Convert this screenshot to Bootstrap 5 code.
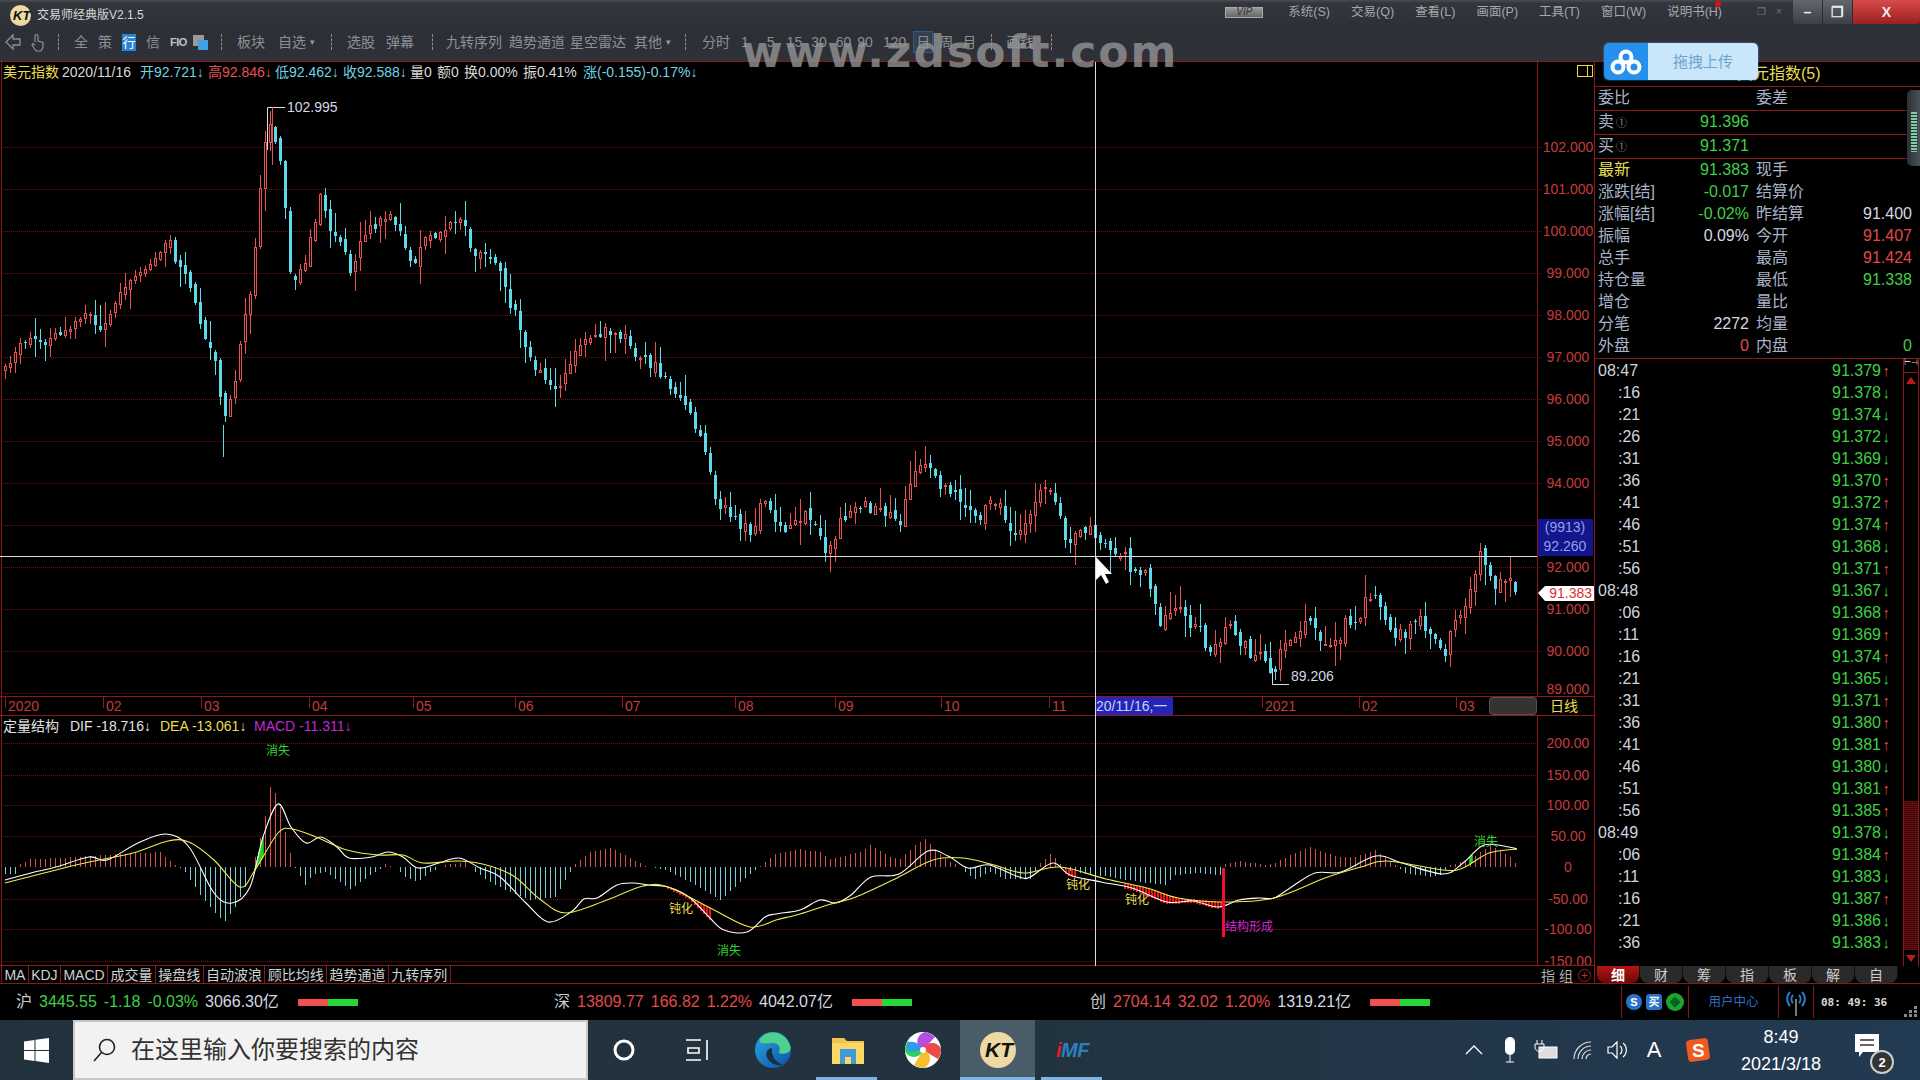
<!DOCTYPE html>
<html lang="zh-CN">
<head>
    <meta charset="UTF-8">
    <meta name="viewport" content="width=device-width, initial-scale=1.0">
    <title>交易师经典版</title>
    <link href="https://cdn.jsdelivr.net/npm/bootstrap@5.3.0/dist/css/bootstrap.min.css" rel="stylesheet">
    <style>
        html, body { width: 1920px; height: 1080px; overflow: hidden; background: #000; }
        body { font-family: "Liberation Sans", "Noto Sans CJK SC", sans-serif; font-size: 14px; line-height: 1; color: #c8c8d0; }
        .app-head { height: 62px; background: linear-gradient(#4a4d53 0, #33363c 3px, #2c2f36 30px, #2e3138 100%); border-bottom: 1px solid #8a1a1a; }
        .title-row { height: 30px; font-size: 12px; }
        .app-title { color: #d8d8d8; margin-left: 6px; }
        .kt-logo { width: 21px; height: 21px; margin-left: 10px; }
        .menu-box { margin-left: auto; color: #a4a7ac; font-size: 12.5px; gap: 21px; }
        .menu-box > span { margin-bottom: 6px; }
        .vip-tag { width: 38px; height: 11px; background: linear-gradient(#999, #666); color: #333; font-size: 10px; font-style: italic; border: 1px solid #aaa; margin-right: 4px; }
        .has-dot { position: relative; }
        .has-dot::after { content: ""; position: absolute; right: 1px; top: -5px; width: 6px; height: 6px; border-radius: 50%; background: #e01010; }
        .win-mini { color: #777; font-size: 10px; margin-left: 14px; gap: 10px; width: 15px; }
        .win-btns { width: 127px; height: 24px; margin-top: -6px; border-radius: 0 0 3px 3px; overflow: hidden; }
        .win-btn { width: 30px; height: 24px; background: linear-gradient(#63666c, #3c3f45); color: #eee; border-right: 1px solid #2a2c30; font-size: 14px; font-weight: 700; }
        .win-close { width: 67px; background: linear-gradient(#d84a4a, #9c2020); border-right: 0; }
        .tool-row { height: 24px; color: #8d9096; padding-left: 4px; }
        .tool-sep { width: 0; height: 16px; border-left: 1px dashed #8d9096; }
        .drop-mark { font-size: 9px; color: #999; margin-left: 4px; }
        .hang-box { width: 14px; height: 17px; background: #2b83d6; color: #fff; font-size: 13px; }
        .fio-txt { font-weight: 700; font-size: 11px; color: #c0c2c6; letter-spacing: -.5px; width: 15px; }
        .range-on { border: 1px solid #31568c; background: #35404f; padding: 3px 2px; margin-right: -3px; }
        .ml-5 { margin-left: 5px; } .ml-6 { margin-left: 6px; } .ml-7 { margin-left: 7px; } .ml-8 { margin-left: 8px; } .ml-9 { margin-left: 9px; }
        .ml-10 { margin-left: 10px; } .ml-11 { margin-left: 11px; } .ml-12 { margin-left: 12px; } .ml-13 { margin-left: 13px; } .ml-14 { margin-left: 14px; }
        .ml-15 { margin-left: 15px; } .ml-16 { margin-left: 16px; } .ml-17 { margin-left: 17px; } .ml-18 { margin-left: 18px; }
        .mr-10 { margin-right: 10px; } .mr-13 { margin-right: 13px; } .mr-14 { margin-right: 14px; } .mr-15 { margin-right: 15px; } .mr-16 { margin-right: 16px; }
        .water-mark { position: absolute; left: 742px; top: 26px; color: rgba(150, 150, 150, .8); font: 700 44px "DejaVu Sans", sans-serif; letter-spacing: 2px; line-height: 52px; pointer-events: none; }
        .upload-box { position: absolute; z-index: 3; left: 1604px; top: 43px; width: 154px; height: 37px; display: flex; border-radius: 5px; overflow: hidden; box-shadow: 0 0 2px #46a0f0; }
        .upload-ico { width: 44px; background: #2590ee; }
        .upload-txt { flex: 1; background: #c9e6fb; color: #6fa4cf; font-size: 15px; }
        .work-row { height: 922px; }
        .chart-col { width: 1594px; }
        .chart-svg { display: block; }
        .ind-tabs { height: 18px; border-bottom: 1px solid #8a1a1a; color: #d0d0d0; font-size: 14px; padding-left: 1px; }
        .ind-tab { height: 17px; padding: 2px 2.4px 0; border-right: 1px solid #8a1a1a; }
        .ind-tab:first-child { border-left: 1px solid #8a1a1a; }
        .ind-right { margin-left: auto; color: #b0b0b0; gap: 5px; padding-right: 3px; padding-top: 2px; }
        .plus-ring { width: 13px; height: 13px; border: 1px solid #a02020; border-radius: 50%; color: #c03030; font-size: 11px; }
        .side-col { width: 326px; border-left: 1px solid #8a1a1a; position: relative; font-size: 16px; }
        .side-head { height: 24px; color: #e8dc50; padding-left: 142px; }
        .line-row { height: 24px; border-top: 1px solid #8a1a1a; padding-left: 3px; padding-right: 8px; padding-bottom: 2px; }
        .q-lab { color: #a8b3c8; }
        .circ-num { color: #888; font-size: 11px; margin-left: 2px; }
        .q-wide { width: 158px; }
        .q-short { width: 58px; }
        .q-val { width: 93px; text-align: right; }
        .side-stats { height: 200px; border-top: 1px solid #8a1a1a; padding: 0 8px 0 3px; }
        .stat-row { height: 22px; }
        .stat-left { width: 151px; }
        .stat-right { width: 156px; margin-left: 7px; }
        .c-green { color: #3fcf45; }
        .c-red { color: #e04a4a; }
        .c-white { color: #d6d8e2; }
        .c-yel { color: #eadf52; }
        .tick-box { border-top: 1px solid #8a1a1a; height: 608px; }
        .tick-col { width: 308px; padding-top: 2px; }
        .tick-row { height: 22px; padding-left: 3px; padding-right: 13px; padding-bottom: 2px; }
        .tick-time { color: #d0d4de; }
        .tick-sub { padding-left: 20px; }
        .tick-arrow { width: 9px; text-align: right; font-size: 15px; }
        .tick-strip { width: 16px; border-left: 1px solid #8a1a1a; border-right: 1px solid #8a1a1a; position: relative; }
        .strip-pin { height: 14px; color: #ddd; font-size: 8px; text-align: center; border-bottom: 1px solid #8a1a1a; }
        .strip-up { position: absolute; left: 2px; top: 18px; border: 5px solid transparent; border-bottom: 7px solid #c01818; border-top: 0; }
        .strip-thumb { position: absolute; left: 0; right: 0; top: 442px; height: 149px; background: repeating-linear-gradient(#6a0f0f 0, #6a0f0f 1px, #3a0606 1px, #3a0606 2px); }
        .strip-down { position: absolute; left: 2px; top: 596px; border: 5px solid transparent; border-top: 7px solid #c01818; border-bottom: 0; }
        .grip-vol { position: absolute; right: 0; top: 28px; width: 13px; height: 76px; border-radius: 5px 0 0 5px; background: linear-gradient(90deg, #2a3034, #4a5257); }
        .grip-bars { position: absolute; right: 3px; top: 22px; width: 6px; height: 40px; background: repeating-linear-gradient(#7ed0a0 0, #7ed0a0 2px, #2a3034 2px, #2a3034 3px); }
        .detail-tabs { height: 18px; border-bottom: 1px solid #8a1a1a; padding-left: 2px; font-size: 14px; }
        .detail-tab { width: 43px; height: 17px; background: #2a2a2a; border-radius: 0 0 8px 8px; color: #ccc; border-right: 1px solid #111; }
        .detail-tab.is-on { background: linear-gradient(#b81414, #6a0808); color: #fff; font-weight: 700; }
        .state-bar { height: 36px; font-size: 16px; position: relative; }
        .mkt-block { position: absolute; top: 10px; height: 16px; gap: 7px; white-space: nowrap; }
        .mkt-hu { left: 16px; } .mkt-shen { left: 554px; } .mkt-chuang { left: 1090px; }
        .mkt-bars { display: flex; margin-left: 12px; }
        .mkt-r { width: 30px; height: 7px; background: #f35050; }
        .mkt-g { width: 30px; height: 7px; background: #23d838; }
        .state-right { position: absolute; left: 1621px; top: 2px; height: 32px; width: 280px; }
        .ico-chip { width: 16px; height: 16px; border-radius: 3px; color: #fff; font-size: 11px; font-weight: 700; background: #2a72c8; }
        .ico-round { border-radius: 50%; }
        .red-sep { width: 0; height: 32px; border-left: 1px solid #8a1a1a; }
        .user-link { color: #2f6fc8; font-size: 12.5px; width: 89px; text-align: center; }
        .wifi-cell { width: 34px; }
        .clock-txt { color: #d8d8d8; font: 700 11px "DejaVu Sans Mono", monospace; margin-left: 7px; }
        .grip-dots { position: absolute; right: 2px; bottom: 2px; }
        .task-bar { height: 60px; background: linear-gradient(90deg, #21323d, #22323e 50%, #223a52); position: relative; color: #fff; }
        .start-btn { width: 73px; }
        .find-box { width: 515px; height: 60px; background: #f2f2f2; border: 2px solid #c8c8c8; color: #333; font-size: 24px; padding-left: 18px; gap: 14px; }
        .cortana-cell { width: 72px; }
        .taskview-cell { width: 74px; }
        .task-cell { width: 75px; height: 60px; position: relative; }
        .task-cell.is-open::after { content: ""; position: absolute; left: 6px; right: 8px; bottom: 0; height: 3px; background: #7db4e4; }
        .task-cell.is-on { background: #4a5c68; }
        .task-cell.is-on::after { left: 0; right: 0; }
        .edge-cell { margin-left: 1px; }
        .imf-txt { font: italic 900 20px "Liberation Sans", sans-serif; color: #2f7fbf; letter-spacing: -.5px; }
        .imf-i { color: #e02020; }
        .tray-box { margin-left: auto; height: 60px; margin-right: 24px; }
        .tray-cell { width: 36px; height: 60px; }
        .tray-letter { font-size: 22px; }
        .clock-box { width: 130px; height: 60px; font-size: 18px; gap: 9px; }
        .note-cell { width: 50px; position: relative; }
        .note-icon { margin-top: -6px; margin-left: -8px; }
        .note-num { position: absolute; left: 24px; top: 30px; width: 24px; height: 24px; border-radius: 50%; border: 2px solid #ccc; background: #333; font-size: 13px; font-weight: 700; }
    </style>
</head>
<body>
    <!-- title + toolbar -->
    <div class="app-head position-relative">
        <div class="title-row d-flex align-items-center">
            <svg class="kt-logo" viewBox="0 0 21 21"><circle cx="10.5" cy="10.5" r="10.5" fill="#ecd9a4"/><text x="3" y="15" font-size="13" font-weight="700" font-style="italic" font-family="Liberation Sans" fill="#111">KT</text></svg>
            <span class="app-title">交易师经典版V2.1.5</span>
            <div class="menu-box d-flex align-items-center">
                <span class="vip-tag d-flex align-items-center justify-content-center">VIP</span>
                <span>系统(S)</span><span>交易(Q)</span><span>查看(L)</span><span>画面(P)</span><span>工具(T)</span><span>窗口(W)</span><span class="has-dot">说明书(H)</span>
                <span class="win-mini d-flex"><span>❐</span><span>×</span></span>
                <div class="win-btns d-flex">
                    <span class="win-btn d-flex align-items-center justify-content-center">–</span>
                    <span class="win-btn d-flex align-items-center justify-content-center">❐</span>
                    <span class="win-btn win-close d-flex align-items-center justify-content-center">X</span>
                </div>
            </div>
        </div>
        <div class="tool-row d-flex align-items-center">
            <svg width="18" height="18" viewBox="0 0 18 18" fill="none" stroke="#8d9096" stroke-width="1.3"><path d="M9 2 2 9l7 7v-4h7V6H9z"/></svg>
            <svg class="ms-2" width="16" height="19" viewBox="0 0 16 19" fill="none" stroke="#8d9096" stroke-width="1.2"><path d="M5 9V3a1.4 1.4 0 0 1 3 0v5l5 1.5V14l-2 4H6l-4-6 1-1.5L5 12"/></svg>
            <span class="tool-sep ml-12 mr-15"></span>
            <span>全</span><span class="ml-10">策</span><span class="hang-box ml-10 d-flex align-items-center justify-content-center">行</span><span class="ml-10">信</span>
            <span class="fio-txt ml-10">FIO</span>
            <svg class="ml-8" width="15" height="15" viewBox="0 0 15 15"><rect width="11" height="11" fill="#9a9a9a"/><rect x="5" y="5" width="10" height="10" fill="#3ea0e8"/></svg>
            <span class="tool-sep ml-13 mr-15"></span>
            <span>板块</span><span class="ml-13">自选</span><span class="drop-mark">▾</span>
            <span class="tool-sep ml-16 mr-15"></span>
            <span>选股</span><span class="ml-11">弹幕</span>
            <span class="tool-sep ml-18 mr-13"></span>
            <span>九转序列</span><span class="ml-7">趋势通道</span><span class="ml-5">星空雷达</span><span class="ml-8">其他</span><span class="drop-mark">▾</span>
            <span class="tool-sep ml-14 mr-16"></span>
            <span>分时</span>
            <span class="ml-11">1</span><span class="ml-18">5</span><span class="ml-12">15</span><span class="ml-9">30</span><span class="ml-9">60</span><span class="ml-6">90</span><span class="ml-10">120</span>
            <span class="range-on ml-7">日</span><span class="ml-9">周</span><span class="ml-9">月</span>
            <span class="tool-sep ml-15 mr-14"></span>
            <span>画线</span>
            <span class="tool-sep ml-17"></span>
        </div>
        <div class="water-mark">www.zdsoft.com</div>
        <div class="upload-box">
            <div class="upload-ico d-flex align-items-center justify-content-center">
                <svg width="32" height="26" viewBox="0 0 32 26" fill="none" stroke="#fff" stroke-width="4"><circle cx="16" cy="8" r="5.5"/><circle cx="8" cy="18" r="5.5"/><circle cx="24" cy="18" r="5.5"/></svg>
            </div>
            <div class="upload-txt d-flex align-items-center justify-content-center">拖拽上传</div>
        </div>
    </div>

    <div class="work-row d-flex">
        <!-- charts -->
        <div class="chart-col">
            <svg id="chartSvg" class="chart-svg" width="1594" height="904" viewBox="0 62 1594 904"></svg>
            <div class="ind-tabs d-flex align-items-center">
                <span class="ind-tab">MA</span><span class="ind-tab">KDJ</span><span class="ind-tab">MACD</span><span class="ind-tab">成交量</span><span class="ind-tab">操盘线</span><span class="ind-tab">自动波浪</span><span class="ind-tab">顾比均线</span><span class="ind-tab">趋势通道</span><span class="ind-tab">九转序列</span>
                <span class="ind-right d-flex align-items-center"><span>指 组</span><span class="plus-ring d-flex align-items-center justify-content-center">+</span></span>
            </div>
        </div>
        <!-- quote panel -->
        <div class="side-col">
            <div class="side-head d-flex align-items-center">美元指数(5)</div>
            <div class="line-row d-flex align-items-center"><span class="q-lab q-wide">委比</span><span class="q-lab">委差</span></div>
            <div class="line-row d-flex align-items-center"><span class="q-lab q-short">卖<span class="circ-num">①</span></span><span class="q-val c-green">91.396</span></div>
            <div class="line-row d-flex align-items-center"><span class="q-lab q-short">买<span class="circ-num">①</span></span><span class="q-val c-green">91.371</span></div>
            <div class="side-stats" id="statBox"></div>
            <div class="tick-box d-flex">
                <div class="tick-col" id="tickBox"></div>
                <div class="tick-strip">
                    <div class="strip-pin">⊢⊣</div>
                    <span class="strip-up"></span><span class="strip-thumb"></span><span class="strip-down"></span>
                </div>
            </div>
            <div class="detail-tabs d-flex">
                <span class="detail-tab is-on d-flex align-items-center justify-content-center">细</span><span class="detail-tab d-flex align-items-center justify-content-center">财</span><span class="detail-tab d-flex align-items-center justify-content-center">筹</span><span class="detail-tab d-flex align-items-center justify-content-center">指</span><span class="detail-tab d-flex align-items-center justify-content-center">板</span><span class="detail-tab d-flex align-items-center justify-content-center">解</span><span class="detail-tab d-flex align-items-center justify-content-center">自</span>
            </div>
            <div class="grip-vol"><span class="grip-bars"></span></div>
        </div>
    </div>

    <!-- market strip -->
    <div class="state-bar">
        <div class="mkt-block mkt-hu d-flex align-items-center"><span>沪</span><span class="c-green">3445.55</span><span class="c-green">-1.18</span><span class="c-green">-0.03%</span><span class="c-white">3066.30亿</span><span class="mkt-bars"><span class="mkt-r"></span><span class="mkt-g"></span></span></div>
        <div class="mkt-block mkt-shen d-flex align-items-center"><span>深</span><span class="c-red">13809.77</span><span class="c-red">166.82</span><span class="c-red">1.22%</span><span class="c-white">4042.07亿</span><span class="mkt-bars"><span class="mkt-r"></span><span class="mkt-g"></span></span></div>
        <div class="mkt-block mkt-chuang d-flex align-items-center"><span>创</span><span class="c-red">2704.14</span><span class="c-red">32.02</span><span class="c-red">1.20%</span><span class="c-white">1319.21亿</span><span class="mkt-bars"><span class="mkt-r"></span><span class="mkt-g"></span></span></div>
        <div class="state-right d-flex align-items-center">
            <span class="red-sep"></span>
            <span class="ico-chip ico-round d-flex align-items-center justify-content-center ms-1">S</span>
            <span class="ico-chip d-flex align-items-center justify-content-center ms-1">买</span>
            <svg class="ms-1" width="18" height="18" viewBox="0 0 16 16"><circle cx="8" cy="8" r="8" fill="#1fa52f"/><path d="M8 3l5 5-5 5-5-5z" fill="#062"/></svg>
            <span class="red-sep ms-1"></span>
            <span class="user-link">用户中心</span>
            <span class="red-sep"></span>
            <span class="wifi-cell d-flex justify-content-center"><svg width="26" height="30" viewBox="0 0 26 30" fill="none" stroke="#2e78c8" stroke-width="2"><path d="M7 5a10 10 0 0 0 0 14M19 5a10 10 0 0 1 0 14M10 8a6 6 0 0 0 0 8M16 8a6 6 0 0 1 0 8"/><path d="M13 12v17" stroke="#777" stroke-width="2"/></svg></span>
            <span class="red-sep"></span>
            <span class="clock-txt">08: 49: 36</span>
        </div>
        <svg class="grip-dots" width="14" height="14" viewBox="0 0 14 14" fill="#888"><path d="M10 2h3v3h-3zM5 6h3v3H5zM10 6h3v3h-3zM0 10h3v3H0zM5 10h3v3H5zM10 10h3v3h-3z"/></svg>
    </div>

    <!-- windows taskbar -->
    <div class="task-bar d-flex">
        <div class="start-btn d-flex align-items-center justify-content-center">
            <svg width="25" height="25" viewBox="0 0 25 25" fill="#fff"><path d="M0 3.5 10.5 2v10H0zM11.5 1.8 25 0v12H11.5zM0 13h10.5v10L0 21.5zM11.5 13H25v12l-13.5-1.9z"/></svg>
        </div>
        <div class="find-box d-flex align-items-center">
            <svg width="24" height="26" viewBox="0 0 24 26" fill="none" stroke="#222" stroke-width="1.6"><circle cx="14" cy="10" r="7.5"/><path d="M8.5 15.5 1 24"/></svg>
            <span>在这里输入你要搜索的内容</span>
        </div>
        <div class="cortana-cell d-flex align-items-center justify-content-center"><svg width="22" height="22" viewBox="0 0 22 22" fill="none" stroke="#fff" stroke-width="3"><circle cx="11" cy="11" r="9"/></svg></div>
        <div class="taskview-cell d-flex align-items-center justify-content-center"><svg width="24" height="22" viewBox="0 0 24 22" fill="none" stroke="#fff" stroke-width="1.6"><path d="M1 1h15M1 21h15M3 9h11v5H3zM22 1v20"/></svg></div>
        <div class="task-cell edge-cell d-flex align-items-center justify-content-center">
            <svg width="36" height="36" viewBox="0 0 36 36"><defs><linearGradient id="edgeA" x1="0" y1="0" x2="1" y2="1"><stop offset="0" stop-color="#2aa9e0"/><stop offset="1" stop-color="#0d4fa8"/></linearGradient></defs><circle cx="18" cy="18" r="18" fill="url(#edgeA)"/><path d="M5 7C12-3 31-2 35.5 15c1 6-6 8-12 6 3-4 1-10-6-10C10 11 4 13 5 7z" fill="#4fd08f"/><path d="M17 16c-6 1-7 7-4 11 3 5 9 7 15 6-6-2-12-8-11-17z" fill="#1b2f3c"/></svg>
        </div>
        <div class="task-cell is-open d-flex align-items-center justify-content-center">
            <svg width="32" height="28" viewBox="0 0 32 28"><path d="M0 2h12l3 3h17v23H0z" fill="#f2c14e"/><path d="M0 7h32v21H0z" fill="#fbd766"/><path d="M8 13h16v15h-5v-7h-6v7H8z" fill="#3f9ad8"/></svg>
        </div>
        <div class="task-cell d-flex align-items-center justify-content-center">
            <svg width="36" height="36" viewBox="0 0 36 36"><circle cx="18" cy="18" r="18" fill="#fff"/><path d="M18 18C10 15 10 3 20 0c6 1 10 5 10 5z" fill="#b64fe0"/><path d="M18 18c2-8 14-10 18-1 0 6-3 10-3 10z" fill="#ee4a4a"/><path d="M18 18c8 2 10 13 1 18-6 0-10-3-10-3z" fill="#f6c02c"/><path d="M18 18c-2 8-14 10-18 1 0-6 3-10 3-10z" fill="#2fd060"/><path d="M18 18C14 10 4 6 1 14l3 6z" fill="#2f9be8"/><circle cx="18" cy="18" r="3" fill="#fff"/></svg>
        </div>
        <div class="task-cell is-on is-open d-flex align-items-center justify-content-center">
            <svg width="36" height="36" viewBox="0 0 36 36"><circle cx="18" cy="18" r="18" fill="#ecd9a4"/><text x="5" y="25" font-size="21" font-weight="700" font-style="italic" font-family="Liberation Sans" fill="#111">KT</text></svg>
        </div>
        <div class="task-cell is-open d-flex align-items-center justify-content-center"><span class="imf-txt"><span class="imf-i">i</span>MF</span></div>
        <div class="tray-box d-flex align-items-center">
            <span class="tray-cell d-flex align-items-center justify-content-center"><svg width="18" height="10" viewBox="0 0 18 10" fill="none" stroke="#fff" stroke-width="1.3"><path d="M1 9l8-8 8 8"/></svg></span>
            <span class="tray-cell d-flex align-items-center justify-content-center"><svg width="14" height="26" viewBox="0 0 14 26" fill="#fff"><rect x="2" y="0" width="10" height="18" rx="5"/><path d="M7 18v7M3 25h8" stroke="#fff" fill="none"/></svg></span>
            <span class="tray-cell d-flex align-items-center justify-content-center"><svg width="24" height="20" viewBox="0 0 24 20" fill="none" stroke="#fff"><rect x="5" y="7" width="18" height="11" fill="#ddd"/><path d="M3 0v4M8 0v4M1 4h9v3a4 4 0 0 1-9 0z"/></svg></span>
            <span class="tray-cell d-flex align-items-center justify-content-center"><svg width="20" height="20" viewBox="0 0 20 20" fill="none" stroke="#ddd" stroke-width="1.2"><path d="M2 19a17 17 0 0 1 17-17M6 19A13 13 0 0 1 19 6M10 19a9 9 0 0 1 9-9M14 19a5 5 0 0 1 5-5"/></svg></span>
            <span class="tray-cell d-flex align-items-center justify-content-center"><svg width="22" height="20" viewBox="0 0 22 20" fill="none" stroke="#fff" stroke-width="1.2"><path d="M1 7h4l5-5v16l-5-5H1zM13 6a5 5 0 0 1 0 8M16 3a9 9 0 0 1 0 14"/></svg></span>
            <span class="tray-cell tray-letter d-flex align-items-center justify-content-center">A</span>
            <span class="tray-cell ml-8 d-flex align-items-center justify-content-center"><svg width="24" height="26" viewBox="0 0 24 26"><rect x="1" y="2" width="22" height="22" rx="4" fill="#ee5a22" transform="rotate(-8 12 13)"/><text x="6" y="20" font-size="19" font-weight="700" font-family="Liberation Sans" fill="#fff">S</text></svg></span>
            <div class="clock-box d-flex flex-column align-items-center justify-content-center"><span>8:49</span><span>2021/3/18</span></div>
            <div class="note-cell tray-cell d-flex align-items-center justify-content-center">
                <svg class="note-icon" width="24" height="26" viewBox="0 0 24 26" fill="#fff"><path d="M0 0h24v18H8l-4 5v-5H0z"/><path d="M5 6h14M5 11h14" stroke="#333" stroke-width="1.5"/></svg>
                <span class="note-num d-flex align-items-center justify-content-center">2</span>
            </div>
        </div>
    </div>

    <script src="https://cdn.jsdelivr.net/npm/bootstrap@5.3.0/dist/js/bootstrap.bundle.min.js"></script>
    <script>
        // close price path read off the picture, in page px
        const pricePath = [[5,368],[11,363],[15,350],[20,342],[25,340],[34,340],[39,345],[44,347],[49,338],[64,333],[73,323],[88,313],[92,317],[97,332],[102,328],[112,313],[118,298],[126,283],[136,278],[146,270],[155,260],[165,243],[170,245],[175,257],[189,282],[195,303],[199,313],[204,342],[214,362],[219,387],[223,430],[229,407],[239,357],[244,317],[248,300],[252,282],[257,222],[262,157],[267,123],[272,132],[277,142],[281,173],[286,223],[291,280],[296,283],[306,257],[311,237],[316,213],[320,200],[325,213],[330,230],[336,240],[345,257],[349,268],[354,263],[359,240],[364,237],[374,227],[384,213],[389,217],[394,223],[404,243],[409,263],[412,272],[422,247],[427,232],[432,233],[442,230],[452,223],[461,218],[466,230],[471,250],[476,260],[486,247],[495,260],[505,287],[514,313],[524,337],[529,357],[534,363],[543,377],[548,390],[557,386],[575,349],[594,331],[616,328],[631,349],[661,373],[680,394],[692,422],[704,453],[716,502],[735,520],[749,533],[765,496],[784,533],[808,514],[827,551],[845,514],[863,502],[882,514],[900,520],[912,478],[925,463],[943,490],[961,502],[980,514],[998,496],[1005,517],[1010,537],[1019,532],[1029,522],[1034,510],[1038,487],[1043,483],[1054,493],[1061,517],[1067,553],[1073,533],[1082,527],[1092,533],[1101,547],[1117,555],[1126,547],[1130,567],[1140,573],[1145,567],[1151,600],[1160,620],[1168,615],[1180,608],[1189,620],[1203,637],[1209,657],[1218,643],[1228,625],[1233,637],[1243,640],[1253,657],[1262,658],[1272,673],[1277,660],[1281,650],[1287,632],[1295,643],[1300,637],[1306,620],[1316,623],[1323,643],[1331,640],[1339,637],[1344,623],[1354,627],[1362,607],[1373,593],[1379,607],[1387,623],[1392,633],[1408,633],[1417,615],[1427,630],[1436,647],[1446,650],[1452,627],[1461,610],[1471,583],[1480,550],[1486,567],[1494,587],[1499,583],[1509,573],[1515,592],[1518,593]];
        const difPath = [[5,880],[31,873],[56,867],[89,857],[107,860],[138,843],[166,834],[189,847],[214,893],[232,903],[250,887],[263,837],[278,804],[291,827],[306,843],[321,837],[337,847],[349,858],[372,857],[388,852],[403,857],[418,868],[439,863],[459,858],[480,868],[500,877],[526,903],[548,922],[571,912],[584,899],[597,898],[617,885],[633,883],[648,885],[668,887],[689,897],[709,917],[724,930],[747,932],[765,917],[776,914],[800,910],[820,900],[836,903],[851,895],[871,877],[899,874],[928,851],[948,856],[968,868],[989,865],[1019,877],[1030,877],[1053,863],[1070,875],[1101,882],[1132,888],[1167,902],[1193,901],[1218,907],[1239,900],[1259,898],[1274,898],[1290,888],[1315,873],[1341,872],[1376,856],[1402,863],[1443,874],[1463,863],[1484,845],[1509,847],[1517,849]];
        const deaPath = [[5,883],[56,870],[89,862],[133,853],[168,841],[189,842],[214,860],[240,887],[255,870],[278,833],[292,829],[316,837],[347,850],[378,855],[403,855],[423,863],[459,861],[490,866],[515,877],[541,900],[566,913],[607,900],[643,886],[668,887],[714,910],[750,927],[776,920],[800,914],[831,904],[856,897],[897,878],[933,860],[963,858],[994,865],[1024,873],[1060,867],[1106,879],[1147,888],[1178,898],[1223,902],[1274,898],[1325,878],[1361,867],[1387,861],[1443,870],[1463,868],[1489,853],[1517,849]];
        const histPath = [[5,-7],[15,-7],[20,3],[30,8],[60,9],[75,10],[90,11],[120,13],[140,14],[160,15],[170,6],[178,0],[185,-5],[200,-28],[214,-45],[224,-55],[235,-40],[245,-20],[250,0],[255,10],[263,40],[270,80],[278,70],[285,35],[293,2],[298,-5],[305,-18],[312,-8],[325,-5],[340,-15],[350,-22],[370,-8],[380,-2],[385,3],[395,0],[405,-10],[418,-15],[430,-5],[445,2],[465,5],[475,-5],[490,-15],[510,-25],[530,-33],[555,-30],[570,-5],[575,3],[590,15],[610,19],[625,12],[645,1],[665,-3],[690,-15],[720,-33],[740,-15],[755,-3],[762,3],[775,13],[800,18],[820,15],[830,8],[860,15],[870,22],[890,10],[900,8],[915,22],[925,28],[945,8],[960,0],[965,-5],[975,-12],[990,-5],[1005,-12],[1030,-12],[1040,4],[1050,13],[1058,6],[1065,-3],[1085,-7],[1110,-10],[1140,-15],[1165,-18],[1175,-8],[1200,-6],[1220,-8],[1225,3],[1240,6],[1265,2],[1275,4],[1290,12],[1310,20],[1325,14],[1340,10],[1355,10],[1375,17],[1385,10],[1405,-6],[1430,-10],[1440,-8],[1450,2],[1470,8],[1490,22],[1510,10],[1517,1]];

        function lookup(path, x) {
            for (let i = 1; i < path.length; i++) {
                if (x <= path[i][0]) {
                    const a = path[i - 1], b = path[i];
                    return a[1] + (b[1] - a[1]) * (x - a[0]) / (b[0] - a[0]);
                }
            }
            return path[path.length - 1][1];
        }

        // smooth line through the read-off points
        function smooth(path) {
            let d = `M${path[0][0]} ${path[0][1]}`;
            for (let i = 0; i < path.length - 1; i++) {
                const p0 = path[Math.max(i - 1, 0)], p1 = path[i], p2 = path[i + 1], p3 = path[Math.min(i + 2, path.length - 1)];
                const c1x = p1[0] + (p2[0] - p0[0]) / 6, c1y = p1[1] + (p2[1] - p0[1]) / 6;
                const c2x = p2[0] - (p3[0] - p1[0]) / 6, c2y = p2[1] - (p3[1] - p1[1]) / 6;
                d += `C${c1x.toFixed(1)} ${c1y.toFixed(1)} ${c2x.toFixed(1)} ${c2y.toFixed(1)} ${p2[0]} ${p2[1]}`;
            }
            return d;
        }

        let seed = 20201116;
        function rnd() {
            seed = (seed * 1664525 + 1013904223) % 4294967296;
            return seed / 4294967296;
        }

        const gridCol = '#6e1212', axisCol = '#8a1a1a', labelCol = '#c43c3c';
        let out = '';

        // price grid
        for (let p = 89; p <= 102; p++) {
            const y = 651 - (p - 90) * 42;
            out += `<line x1="3" x2="1543" y1="${y + .5}" y2="${y + .5}" stroke="${gridCol}" stroke-dasharray="1 1"/>`;
            out += `<text x="1568" y="${p === 89 ? 694 : y + 5}" text-anchor="middle" font-size="14" fill="${labelCol}">${p}.000</text>`;
        }

        // candles
        let prev = 370;
        for (let x = 5; x <= 1518; x += 5) {
            const amp = x < 170 ? 6 : 13;
            const close = Math.round(lookup(pricePath, x) + (rnd() - .5) * amp);
            const open = Math.round(prev + (rnd() - .5) * amp * .6);
            const top = Math.min(open, close), bot = Math.max(open, close);
            const hi = Math.max(107, top - Math.round(rnd() * rnd() * 24) - 1);
            const lo = Math.min(684, bot + Math.round(rnd() * rnd() * 24) + 1);
            const up = close <= open;
            const col = up ? '#e85252' : '#5dd9ea';
            out += `<line x1="${x + .5}" x2="${x + .5}" y1="${hi}" y2="${lo}" stroke="${col}"/>`;
            const h = Math.max(1, bot - top);
            if (up) out += `<rect x="${x - .5}" y="${top + .5}" width="2" height="${h}" fill="#000" stroke="${col}"/>`;
            else out += `<rect x="${x - 1}" y="${top}" width="3" height="${h}" fill="${col}"/>`;
            prev = close;
        }

        // extreme marks
        out += `<line x1="223.5" x2="223.5" y1="425" y2="457" stroke="#5dd9ea"/>`;
        out += `<path d="M267.5 150V107.5H285M1272.5 668V684.5H1289" fill="none" stroke="#ddd"/>`;
        out += `<line x1="272.5" x2="272.5" y1="107" y2="165" stroke="#e85252"/>`;
        out += `<text x="287" y="112" font-size="14" fill="#d6d8e2">102.995</text>`;
        out += `<text x="1291" y="681" font-size="14" fill="#d6d8e2">89.206</text>`;

        // headline
        out += `<text y="77" font-size="14" fill="#d8d8d8"><tspan x="3" fill="#eadf52">美元指数</tspan><tspan x="62">2020/11/16</tspan><tspan x="140" fill="#6fd3e4">开92.721↓</tspan><tspan x="208" fill="#e85252">高92.846↓</tspan><tspan x="275" fill="#6fd3e4">低92.462↓</tspan><tspan x="343" fill="#6fd3e4">收92.588↓</tspan><tspan x="410">量0</tspan><tspan x="437">额0</tspan><tspan x="464">换0.00%</tspan><tspan x="523">振0.41%</tspan><tspan x="583" fill="#6fd3e4">涨(-0.155)-0.17%↓</tspan></text>`;
        out += `<rect x="1577.5" y="65.5" width="15" height="11" fill="none" stroke="#e8dc40"/><line x1="1587.5" x2="1587.5" y1="65" y2="77" stroke="#e8dc40"/>`;

        // date bar
        out += `<rect x="0" y="696" width="1594" height="20" fill="#000"/>`;
        [[5,'2020'],[103,'02'],[201,'03'],[309,'04'],[413,'05'],[515,'06'],[622,'07'],[735,'08'],[835,'09'],[941,'10'],[1049,'11'],[1262,'2021'],[1359,'02'],[1456,'03']].forEach(d => {
            out += `<line x1="${d[0] + .5}" x2="${d[0] + .5}" y1="696" y2="708" stroke="${axisCol}"/>`;
            out += `<text x="${d[0] + 3}" y="711" font-size="14" fill="${labelCol}">${d[1]}</text>`;
        });
        out += `<rect x="1096" y="697" width="77" height="18" fill="#2424b8"/><text x="1096" y="711" font-size="14" fill="#c8d2f4">20/11/16,一</text>`;
        out += `<rect x="1489.5" y="697.5" width="47" height="17" rx="3" fill="#333" stroke="#555"/>`;
        out += `<text x="1550" y="711" font-size="14" fill="#eadf52">日线</text>`;

        // macd grid and axis
        [[743,'200.00'],[775,'150.00'],[805,'100.00'],[836,'50.00'],[867,null],[899,'-50.00'],[929,'-100.00'],[961,'-150.00']].forEach(g => {
            if (g[1]) out += `<line x1="3" x2="1537" y1="${g[0] + .5}" y2="${g[0] + .5}" stroke="${gridCol}" stroke-dasharray="1 1"/>`;
            out += `<text x="1568" y="${g[0] + 5}" text-anchor="middle" font-size="14" fill="${labelCol}">${g[1] || '0'}</text>`;
        });
        out += `<text y="731" font-size="14" fill="#e0e0e0"><tspan x="3">定量结构</tspan><tspan x="70">DIF -18.716↓</tspan><tspan x="160" fill="#eadf52">DEA -13.061↓</tspan><tspan x="254" fill="#c428d8">MACD -11.311↓</tspan></text>`;

        // histogram
        for (let x = 5; x <= 1517; x += 5) {
            const v = lookup(histPath, x);
            if (Math.abs(v) < .5) continue;
            out += `<line x1="${x + .5}" x2="${x + .5}" y1="867" y2="${(867 - v).toFixed(0)}" stroke="${v > 0 ? '#d65050' : '#7ccbd8'}"/>`;
        }

        // dulled and vanished zones
        for (const zone of [[668, 712], [1066, 1076], [1125, 1222]]) {
            for (let x = zone[0]; x <= zone[1]; x += 3) {
                const a = lookup(deaPath, x), b = lookup(difPath, x);
                out += `<line x1="${x}" x2="${x}" y1="${a.toFixed(0)}" y2="${(b + 2).toFixed(0)}" stroke="#f01010" stroke-width="2"/>`;
            }
        }
        for (const zone of [[255, 263], [1470, 1472]]) {
            for (let x = zone[0]; x <= zone[1]; x += 1) {
                const a = lookup(deaPath, x), b = lookup(difPath, x);
                out += `<line x1="${x}" x2="${x}" y1="${Math.min(a, b).toFixed(0)}" y2="${Math.max(a, b).toFixed(0)}" stroke="#22e022" stroke-width="1.5"/>`;
            }
        }

        // dif / dea
        out += `<path d="${smooth(difPath)}" fill="none" stroke="#fff" stroke-width="1.1"/>`;
        out += `<path d="${smooth(deaPath)}" fill="none" stroke="#f0ec50" stroke-width="1.1"/>`;
        out += `<line x1="1223.5" x2="1223.5" y1="868" y2="937" stroke="#f01030" stroke-width="3"/>`;

        // signal words
        [[266,755,'消失','#30d830'],[717,955,'消失','#30d830'],[669,913,'钝化','#eadf52'],[1066,889,'钝化','#eadf52'],[1125,904,'钝化','#eadf52'],[1225,931,'结构形成','#d028d8'],[1474,846,'消失','#30d830']].forEach(w => {
            out += `<text x="${w[0]}" y="${w[1]}" font-size="12" fill="${w[3]}">${w[2]}</text>`;
        });

        // frame lines
        out += `<path d="M1.5 62V966M1537.5 62V696M1537.5 716V966M0 696.5H1594M0 715.5H1594M0 965.5H1594" stroke="${axisCol}" fill="none"/>`;

        // crosshair, tags, cursor
        out += `<line x1="1095.5" x2="1095.5" y1="62" y2="966" stroke="#dcdcdc"/>`;
        out += `<line x1="0" x2="1537" y1="556.5" y2="556.5" stroke="#dcdcdc"/>`;
        out += `<rect x="1538" y="519" width="55" height="37" fill="#14148c"/>`;
        out += `<text x="1565" y="532" text-anchor="middle" font-size="14" fill="#8fa2e4">(9913)</text><text x="1565" y="551" text-anchor="middle" font-size="14" fill="#8fa2e4">92.260</text>`;
        out += `<path d="M1538 593l7-7h49v15h-49z" fill="#fff"/><text x="1592" y="598" text-anchor="end" font-size="14" fill="#d83030">91.383</text>`;
        out += `<path d="M1096 557v23l5-5 5 9 3-2-4-8h7z" fill="#fff"/>`;

        document.getElementById('chartSvg').innerHTML = out;

        // quote table
        const stats = [
            ['最新', '91.383', 'c-green', '现手', '', ''],
            ['涨跌[结]', '-0.017', 'c-green', '结算价', '', ''],
            ['涨幅[结]', '-0.02%', 'c-green', '昨结算', '91.400', 'c-white'],
            ['振幅', '0.09%', 'c-white', '今开', '91.407', 'c-red'],
            ['总手', '', '', '最高', '91.424', 'c-red'],
            ['持仓量', '', '', '最低', '91.338', 'c-green'],
            ['增仓', '', '', '量比', '', ''],
            ['分笔', '2272', 'c-white', '均量', '', ''],
            ['外盘', '0', 'c-red', '内盘', '0', 'c-green']
        ];
        document.getElementById('statBox').innerHTML = stats.map((s, i) => `
            <div class="stat-row d-flex align-items-center">
                <div class="stat-left d-flex justify-content-between"><span class="${i ? 'q-lab' : 'c-yel'}">${s[0]}</span><span class="${s[2]}">${s[1]}</span></div>
                <div class="stat-right d-flex justify-content-between"><span class="q-lab">${s[3]}</span><span class="${s[5]}">${s[4]}</span></div>
            </div>`).join('');

        // tick list
        const ticks = [['08:47','379','u'],[':16','378','d'],[':21','374','d'],[':26','372','d'],[':31','369','d'],[':36','370','u'],[':41','372','u'],[':46','374','u'],[':51','368','d'],[':56','371','u'],['08:48','367','d'],[':06','368','u'],[':11','369','u'],[':16','374','u'],[':21','365','d'],[':31','371','u'],[':36','380','u'],[':41','381','u'],[':46','380','d'],[':51','381','u'],[':56','385','u'],['08:49','378','d'],[':06','384','u'],[':11','383','d'],[':16','387','u'],[':21','386','d'],[':36','383','d']];
        document.getElementById('tickBox').innerHTML = ticks.map(t => `
            <div class="tick-row d-flex align-items-center justify-content-between">
                <span class="tick-time ${t[0][0] === ':' ? 'tick-sub' : ''}">${t[0]}</span>
                <span class="d-flex"><span class="c-green">91.${t[1]}</span><span class="tick-arrow ${t[2] === 'u' ? 'c-red' : 'c-green'}">${t[2] === 'u' ? '↑' : '↓'}</span></span>
            </div>`).join('');
    </script>
</body>
</html>
